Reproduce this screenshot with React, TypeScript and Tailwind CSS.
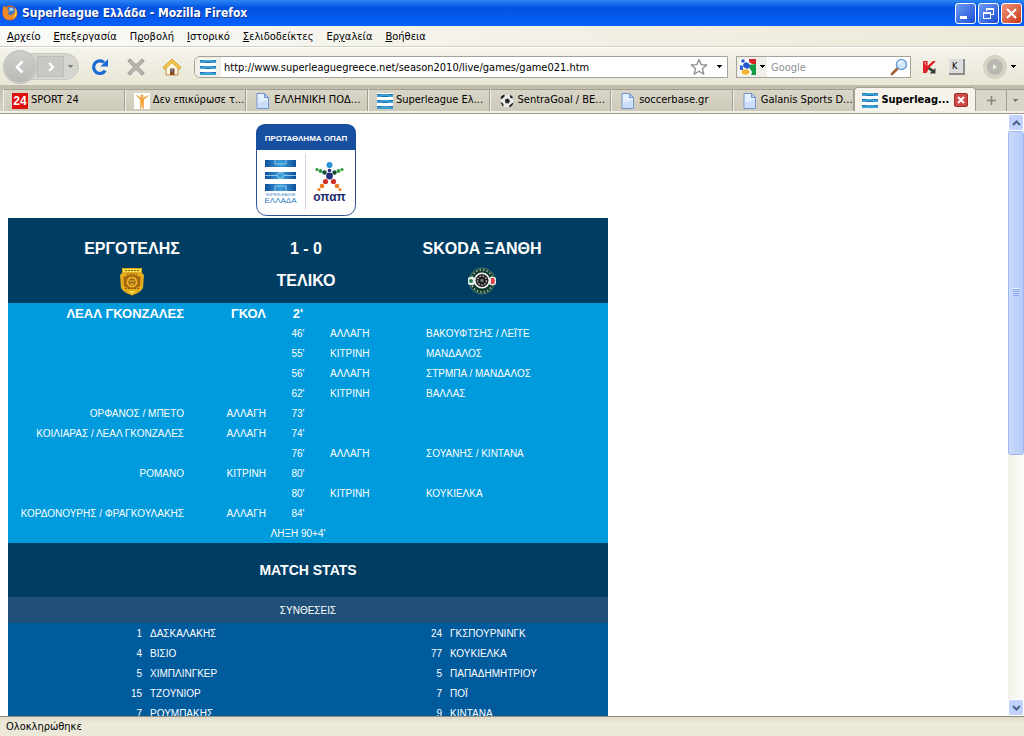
import React from 'react';

type Side = 'home' | 'away';

interface MatchEvent {
  side: Side;
  minute: string;
  action: string;
  player: string;
  goal?: boolean;
}

const menuItems = [
  { before: '', key: 'Α', after: 'ρχείο' },
  { before: '', key: 'Ε', after: 'πεξεργασία' },
  { before: 'Π', key: 'ρ', after: 'οβολή' },
  { before: '', key: 'Ι', after: 'στορικό' },
  { before: '', key: 'Σ', after: 'ελιδοδείκτες' },
  { before: 'Ερ', key: 'γ', after: 'αλεία' },
  { before: '', key: 'Β', after: 'οήθεια' },
];

const events: MatchEvent[] = [
  { side: 'home', minute: "2'", action: 'ΓΚΟΛ', player: 'ΛΕΑΛ ΓΚΟΝΖΑΛΕΣ', goal: true },
  { side: 'away', minute: "46'", action: 'ΑΛΛΑΓΗ', player: 'ΒΑΚΟΥΦΤΣΗΣ / ΛΕΪΤΕ' },
  { side: 'away', minute: "55'", action: 'ΚΙΤΡΙΝΗ', player: 'ΜΑΝΔΑΛΟΣ' },
  { side: 'away', minute: "56'", action: 'ΑΛΛΑΓΗ', player: 'ΣΤΡΜΠΑ / ΜΑΝΔΑΛΟΣ' },
  { side: 'away', minute: "62'", action: 'ΚΙΤΡΙΝΗ', player: 'ΒΑΛΛΑΣ' },
  { side: 'home', minute: "73'", action: 'ΑΛΛΑΓΗ', player: 'ΟΡΦΑΝΟΣ / ΜΠΕΤΟ' },
  { side: 'home', minute: "74'", action: 'ΑΛΛΑΓΗ', player: 'ΚΟΙΛΙΑΡΑΣ / ΛΕΑΛ ΓΚΟΝΖΑΛΕΣ' },
  { side: 'away', minute: "76'", action: 'ΑΛΛΑΓΗ', player: 'ΣΟΥΑΝΗΣ / ΚΙΝΤΑΝΑ' },
  { side: 'home', minute: "80'", action: 'ΚΙΤΡΙΝΗ', player: 'ΡΟΜΑΝΟ' },
  { side: 'away', minute: "80'", action: 'ΚΙΤΡΙΝΗ', player: 'ΚΟΥΚΙΕΛΚΑ' },
  { side: 'home', minute: "84'", action: 'ΑΛΛΑΓΗ', player: 'ΚΟΡΔΟΝΟΥΡΗΣ / ΦΡΑΓΚΟΥΛΑΚΗΣ' },
];

const lineups = [
  ['1', 'ΔΑΣΚΑΛΑΚΗΣ', '24', 'ΓΚΣΠΟΥΡΝΙΝΓΚ'],
  ['4', 'ΒΙΣΙΟ', '77', 'ΚΟΥΚΙΕΛΚΑ'],
  ['5', 'ΧΙΜΠΛΙΝΓΚΕΡ', '5', 'ΠΑΠΑΔΗΜΗΤΡΙΟΥ'],
  ['15', 'ΤΖΟΥΝΙΟΡ', '7', 'ΠΟΪ'],
  ['7', 'ΡΟΥΜΠΑΚΗΣ', '9', 'ΚΙΝΤΑΝΑ'],
];

/* ---------- Icons ---------- */

const FirefoxIcon = () => (
  <svg viewBox="0 0 16 16" className="size-4 shrink-0">
    <circle cx="8" cy="8" r="7.5" fill="#d9601a" />
    <circle cx="8.8" cy="6.8" r="5" fill="#3a78c8" />
    <path d="M8 2.5c2 0 3.500 1 4 2.500l-2 1-3-.5z" fill="#a8d4f4" />
    <path d="M.8 4c0-1.500.6-2.700 1.200-3.500.3 1 .8 1.600 1.500 2 1.500-.4 2.500.3 3 1-1 .3-1.500 1-1.200 1.700l2.200.8c0 1-1 1.200-1.700 1.800.2 2 2.200 2.800 4 2 1.700-.7 3.200-2 3-5 1.500 2.500 1.200 6-1 8.200-3 2.800-8 2.400-10-1C.6 10 .5 7 .8 4z" fill="#f08a24" />
    <path d="M13 3c2 2 2.600 5.500.8 8.200-1 1.600-2.600 2.600-4 3 2.500-2 4.300-5.500 3.200-11.200z" fill="#fbd045" />
  </svg>
);

const SuperleagueIcon = () => (
  <svg viewBox="0 0 16 16" className="size-4 shrink-0" shapeRendering="crispEdges">
    <rect width="16" height="16" fill="#fff" />
    <rect y="1" width="16" height="3" fill="#3d9fd3" />
    <rect y="7" width="16" height="3" fill="#3d9fd3" />
    <rect y="13" width="16" height="3" fill="#3d9fd3" />
    <path d="M0 1h4v1H0zM12 1h4v1h-4zM5 3h6v1H5zM0 7h4v1H0zM12 7h4v1h-4zM5 9h6v1H5zM0 13h4v1H0zM12 13h4v1h-4z" fill="#1f6fae" />
  </svg>
);

const DocumentIcon = () => (
  <svg viewBox="0 0 16 16" className="size-4 shrink-0">
    <path d="M2 .5h7.500l4 4v11H2z" fill="#e4effd" stroke="#6f93cc" />
    <path d="M9.500.5v4h4z" fill="#b9d1f3" stroke="#6f93cc" />
    <path d="M3 10l9.500-3v8H3z" fill="#c9dcf8" />
  </svg>
);

const Sport24Icon = () => (
  <svg viewBox="0 0 16 16" className="size-4 shrink-0">
    <rect width="16" height="16" fill="#e01010" />
    <text x="8" y="12" textAnchor="middle" fontSize="12" fontWeight="700" fill="#fff" fontFamily="Liberation Sans, sans-serif">24</text>
  </svg>
);

const AthleteIcon = () => (
  <svg viewBox="0 0 16 16" className="size-4 shrink-0">
    <rect width="16" height="16" fill="#fff" />
    <circle cx="8" cy="2.800" r="1.400" fill="#f0a23c" />
    <path d="M2 1.500l4 2.800h4l4.500-2.300-.3 1.200-4 3-.5 3.800.3 5.500H8.600L8 11l-.8 5H6L6.300 10 6 6.500 2.500 3z" fill="#f0a23c" />
  </svg>
);

const BallIcon = () => (
  <svg viewBox="0 0 16 16" className="size-4 shrink-0">
    <circle cx="8" cy="8" r="7" fill="#e9e9e9" stroke="#b5b5b5" strokeWidth=".6" />
    <path d="M6 6.500l3-1 2 2.200-1.400 2.800-3.200-.6zM2 3.500L5 1.500l1 1.500-2.500 2.600L1.600 6zM11 1.800l2.700 2-.2 2-2.500-1.300zM1.500 9.500l2 .3 1.300 2.500-.8 1.300zM12 11l2.400-1.500-.8 2.500-2.800 2.500-.8-1.500z" fill="#222" />
  </svg>
);

const ReloadIcon = () => (
  <svg viewBox="0 0 18 18" className="size-[18px]">
    <path d="M14.200 12.600A6.300 6.300 0 1 1 13 4.400" fill="none" stroke="#1c6ad4" strokeWidth="3.200" />
    <path d="M17 1v7.500H9.500z" fill="#1c6ad4" />
  </svg>
);

const StopIcon = () => (
  <svg viewBox="0 0 18 18" className="size-[18px]">
    <path d="M3 3l12 12M15 3L3 15" stroke="#a5a49f" strokeWidth="4" strokeLinecap="square" />
    <path d="M3 3l12 12M15 3L3 15" stroke="#b5b4af" strokeWidth="2.500" />
  </svg>
);

const HomeIcon = () => (
  <svg viewBox="0 0 20 18" className="h-[18px] w-5">
    <path d="M4 9l6-6 6 6v8H4z" fill="#fdf6e0" stroke="#b68b3c" />
    <path d="M10 1l9 8.500-1.800 1.700L10 4.600l-7.200 6.600L1 9.500z" fill="#f9c944" stroke="#c98a1c" strokeWidth=".8" />
    <rect x="8" y="10.500" width="4.500" height="6.500" fill="#8c4a24" />
    <rect x="8.800" y="11.300" width="2" height="2" fill="#4e90d8" />
  </svg>
);

const StarIcon = () => (
  <svg viewBox="0 0 18 18" className="size-[18px]">
    <path d="M9 1.500l2.200 5.100 5.500.4-4.200 3.600 1.300 5.600L9 13.300l-4.800 2.900 1.300-5.600L1.300 7l5.500-.4z" fill="#fff" stroke="#8b8b8b" strokeWidth="1.300" strokeLinejoin="round" />
  </svg>
);

const GoogleIcon = () => (
  <svg viewBox="0 0 16 16" className="size-4 shrink-0">
    <rect width="16" height="16" fill="#fff" />
    <path d="M9 0h7v5h-4L9 3z" fill="#d8232a" />
    <path d="M8 6l8-1v11h-5c1.500-2 1-4-1-6z" fill="#149b48" />
    <path d="M0 6l3 1v4H0z" fill="#2e62d9" />
    <circle cx="3" cy="2" r="1.800" fill="#2559cf" />
    <ellipse cx="6.500" cy="6.500" rx="3.400" ry="3" fill="#2559cf" transform="rotate(30 6.500 6.500)" />
    <ellipse cx="5.500" cy="13" rx="4" ry="2.800" fill="#f2b632" />
  </svg>
);

const MagnifierIcon = () => (
  <svg viewBox="0 0 18 18" className="size-[18px]">
    <path d="M7.500 10.500L2 16" stroke="#9c6238" strokeWidth="2.800" strokeLinecap="round" />
    <circle cx="11.500" cy="6.500" r="5" fill="#cfe8fb" stroke="#6b9fd6" strokeWidth="1.500" />
    <path d="M8.500 6a3 3 0 0 1 4-2.500" stroke="#fff" strokeWidth="1.500" fill="none" />
  </svg>
);

const KasperskyIcon = () => (
  <svg viewBox="0 0 16 16" className="size-4">
    <path d="M2 2h4.500v5L12 2h3L8.500 8.500 5.500 14H2z" fill="#e21f26" />
    <path d="M3 3h2v4z" fill="#f59a96" />
    <path d="M8.500 8l4 2.800L14.500 9v5.500H8.500l2-1.700L7 10z" fill="#3c3c3c" />
  </svg>
);

const Arrow = ({ className }: { className: string }) => (
  <svg viewBox="0 0 5 3" className={`h-[3px] w-[5px] shrink-0 ${className}`} shapeRendering="crispEdges">
    <path d="M0 0h5L2.500 3z" fill="currentColor" />
  </svg>
);

const tabs = [
  { icon: Sport24Icon, title: 'SPORT 24' },
  { icon: AthleteIcon, title: 'Δεν επικύρωσε τ...' },
  { icon: DocumentIcon, title: 'ΕΛΛΗΝΙΚΗ ΠΟΔ...' },
  { icon: SuperleagueIcon, title: 'Superleague Ελ...' },
  { icon: BallIcon, title: 'SentraGoal / ΒΕ...' },
  { icon: DocumentIcon, title: 'soccerbase.gr' },
  { icon: DocumentIcon, title: 'Galanis Sports D...' },
];

/* ---------- Browser chrome ---------- */

const TitleBar = () => (
  <header className="flex h-[26px] shrink-0 items-center gap-1 bg-linear-to-b from-[#2c86f5] via-[#0352e0] via-30% to-[#0561fb] pr-[2px] pl-[2px]">
    <FirefoxIcon />
    <h1 className="flex-1 font-['DejaVu_Sans_Condensed','Noto_Sans',sans-serif] text-[12px] font-bold text-white [text-shadow:1px_1px_0_#0a2f8f]">
      Superleague Ελλάδα - Mozilla Firefox
    </h1>
    <div className="flex gap-[2px]">
      <button aria-label="Minimize" className="size-[21px] rounded-[3px] border border-white bg-linear-to-br from-[#6f9bf5] to-[#1c4bd2]">
        <svg viewBox="0 0 19 19"><rect x="4" y="12" width="7" height="3" fill="#fff" /></svg>
      </button>
      <button aria-label="Restore" className="size-[21px] rounded-[3px] border border-white bg-linear-to-br from-[#6f9bf5] to-[#1c4bd2]">
        <svg viewBox="0 0 19 19" fill="none" stroke="#fff" shapeRendering="crispEdges">
          <path d="M7.500 7V4.500h7v6H12M7 5.500h8" />
          <path d="M4.500 8.500h7v6h-7zM4 9.500h8" />
        </svg>
      </button>
      <button aria-label="Close" className="size-[21px] rounded-[3px] border border-white bg-linear-to-br from-[#f0947a] to-[#c8330c]">
        <svg viewBox="0 0 19 19"><path d="M5 5l9 9M14 5l-9 9" stroke="#fff" strokeWidth="2.200" /></svg>
      </button>
    </div>
  </header>
);

const MenuBar = () => (
  <nav className="flex h-[21px] shrink-0 items-center gap-[13px] border-b border-[#d3d0c2] bg-linear-to-r from-[#fafaf8] to-[#ece9d8] pt-[2px] pl-[7px]">
    {menuItems.map((item) => (
      <button key={item.key} className="leading-[14px]">
        {item.before}
        <span className="underline">{item.key}</span>
        {item.after}
      </button>
    ))}
  </nav>
);

const Toolbar = () => (
  <div className="flex h-[38px] shrink-0 items-center border-t border-white bg-linear-to-b from-[#f5f4ec] to-[#e9e6d5] pr-2 pl-[3px]">
    <div className="flex h-[27px] w-[76px] shrink-0 items-center rounded-full border border-[#c9c8c2] bg-[#d6d5cf]">
      <button aria-label="Back" className="-ml-px flex size-[34px] shrink-0 items-center justify-center rounded-full border-2 border-[#c6c6c2] bg-linear-to-b from-[#cececb] to-[#b9b9b6]">
        <svg viewBox="0 0 16 16" className="size-4"><path d="M10.500 2.500L5 8l5.500 5.500" fill="none" stroke="#fff" strokeWidth="2.600" /></svg>
      </button>
      <button aria-label="Forward" className="flex h-[21px] w-[27px] items-center justify-center border border-[#bcbcb8] bg-[#c8c8c4]">
        <svg viewBox="0 0 12 12" className="size-3"><path d="M4 2l4 4-4 4" fill="none" stroke="#fff" strokeWidth="2.200" /></svg>
      </button>
      <Arrow className="ml-1 text-[#85857f]" />
    </div>
    <button aria-label="Reload" className="ml-3"><ReloadIcon /></button>
    <button aria-label="Stop" className="ml-[18px]"><StopIcon /></button>
    <button aria-label="Home" className="ml-[17px]"><HomeIcon /></button>
    <div className="ml-3 flex h-[22px] min-w-0 flex-1 items-center rounded-l-md border border-[#a5a397] bg-white pr-[5px]">
      <span className="flex h-5 w-[26px] items-center justify-center rounded-l-md bg-[#f0efe9]"><SuperleagueIcon /></span>
      <input
        aria-label="Address"
        className="h-5 min-w-0 flex-1 px-[3px] pt-[2px] outline-none"
        defaultValue="http://www.superleaguegreece.net/season2010/live/games/game021.htm"
      />
      <button aria-label="Bookmark this page"><StarIcon /></button>
      <button aria-label="History" className="ml-[9px]"><Arrow className="text-black" /></button>
    </div>
    <div className="ml-2 flex h-[22px] w-[175px] shrink-0 items-center border border-[#a5a397] bg-white pr-[2px]">
      <button aria-label="Search engine" className="flex h-5 w-[30px] items-center gap-[4px] bg-[#f0efe9] pl-[3px]">
        <GoogleIcon />
        <Arrow className="text-black" />
      </button>
      <input aria-label="Search" placeholder="Google" className="h-5 min-w-0 flex-1 px-1 pt-[2px] outline-none placeholder:text-[#8f8f8f]" />
      <button aria-label="Go"><MagnifierIcon /></button>
    </div>
    <button aria-label="Kaspersky" className="ml-[10px]"><KasperskyIcon /></button>
    <button className="ml-3 flex size-4 items-center border-r-2 border-b-2 border-[#8d8d8d] bg-[#dcdcdc] pl-[3px] text-[9px] leading-3">K</button>
    <button aria-label="Play" className="ml-[18px] flex size-6 items-center justify-center rounded-full border-4 border-[#d5d3c6] bg-[#b9b8b0]">
      <svg viewBox="0 0 8 8" className="size-2"><path d="M2 1l4 3-4 3z" fill="#eeede6" /></svg>
    </button>
    <Arrow className="ml-1 text-black" />
  </div>
);

const TabStrip = () => (
  <div className="shrink-0">
    <div className="flex h-[26px] items-end bg-linear-to-b from-[#bfbcae] to-[#d5d2c3] pl-[3px]">
      <div className="grid min-w-0 flex-1 grid-cols-8 items-end">
        {tabs.map((tab) => {
          const Icon = tab.icon;
          return (
            <button
              key={tab.title}
              className="flex h-[22px] min-w-0 items-center gap-[3px] border-t border-r border-l border-t-[#a19e90] border-r-[#a19e90] border-l-[#f2f0e6] bg-linear-to-b from-[#d9d6c8] to-[#cecab9] pl-2 whitespace-nowrap"
            >
              <Icon />
              <span>{tab.title}</span>
            </button>
          );
        })}
        <div className="flex h-6 min-w-0 items-center gap-[3px] rounded-t-sm border border-b-0 border-[#a19e90] bg-[#f5f3ea] pr-[7px] pl-[7px] font-bold whitespace-nowrap">
          <SuperleagueIcon />
          <button className="min-w-0 flex-1 pt-[2px] text-left">Superleag...</button>
          <button aria-label="Close tab" className="flex size-[14px] shrink-0 items-center justify-center rounded-[2px] border border-[#9c2f2b] bg-[#cf4a48]">
            <svg viewBox="0 0 8 8" className="size-2"><path d="M1 1l6 6M7 1L1 7" stroke="#fff" strokeWidth="2" /></svg>
          </button>
        </div>
      </div>
      <button aria-label="New tab" className="flex h-[22px] w-[31px] shrink-0 items-center justify-center border-t border-r border-[#a19e90] bg-[#d9d6c8]">
        <svg viewBox="0 0 9 9" className="size-[9px]"><path d="M4.500 0v9M0 4.500h9" stroke="#84827a" strokeWidth="1.600" /></svg>
      </button>
      <button aria-label="List all tabs" className="flex h-[22px] w-[17px] shrink-0 items-center justify-center border-t border-[#a19e90] bg-[#d9d6c8]">
        <Arrow className="text-[#777]" />
      </button>
    </div>
    <div className="h-[3px] border-b border-[#9d9a8c] bg-[#f3f1e7]" />
  </div>
);

const ScrollBar = () => (
  <div className="flex w-4 shrink-0 flex-col bg-linear-to-r from-[#f1f0e8] to-[#fdfdfa]">
    <button aria-label="Scroll up" className="flex h-[17px] items-center justify-center rounded-[3px] border border-white bg-[#c1d3fc]">
      <svg viewBox="0 0 9 6" className="h-[6px] w-[9px]"><path d="M1 5l3.500-3.500L8 5" fill="none" stroke="#4d6185" strokeWidth="2" /></svg>
    </button>
    <div className="flex-1">
      <div className="flex h-[57%] flex-col items-center justify-center gap-px rounded-[3px] border border-[#9db7ee] bg-linear-to-r from-[#cbdafd] to-[#b7cbf8]">
        <span className="h-px w-[6px] bg-[#8cadf2] shadow-[0_-1px_0_#eef4fe]" />
        <span className="h-px w-[6px] bg-[#8cadf2]" />
        <span className="h-px w-[6px] bg-[#8cadf2]" />
        <span className="h-px w-[6px] bg-[#8cadf2]" />
      </div>
    </div>
    <button aria-label="Scroll down" className="flex h-[17px] items-center justify-center rounded-[3px] border border-white bg-[#c1d3fc]">
      <svg viewBox="0 0 9 6" className="h-[6px] w-[9px]"><path d="M1 1l3.500 3.500L8 1" fill="none" stroke="#4d6185" strokeWidth="2" /></svg>
    </button>
  </div>
);

/* ---------- Match page ---------- */

const LeagueLogo = () => (
  <svg viewBox="0 0 100 92" className="h-[92px] w-[100px]" fontFamily="Liberation Sans, sans-serif" fontWeight="700">
    <rect x=".5" y=".5" width="99" height="91" rx="10" fill="#fff" stroke="#2a5290" />
    <path d="M0 26V10Q0 0 10 0h80q10 0 10 10v16z" fill="#174fa0" />
    <text x="50" y="17" textAnchor="middle" fontSize="8" fill="#fff">ΠΡΩΤΑΘΛΗΜΑ ΟΠΑΠ</text>
    <path d="M49.500 30v56" stroke="#c9d3e2" />
    <defs>
      <linearGradient id="stripe">
        <stop offset="0" stopColor="#0d4f9e" />
        <stop offset=".5" stopColor="#3aa0dc" />
        <stop offset="1" stopColor="#0d4f9e" />
      </linearGradient>
    </defs>
    <rect x="9" y="36" width="31" height="7" fill="url(#stripe)" />
    <rect x="9" y="48" width="31" height="7" fill="url(#stripe)" />
    <rect x="9" y="60" width="31" height="7" fill="url(#stripe)" />
    <g fill="none" stroke="#b5d9f0" strokeWidth=".8">
      <path d="M19 36v4h11v-4M19 67v-5h11v5" />
      <circle cx="24.500" cy="51.500" r="3" />
      <path d="M9 51.500h12M28 51.500h12" />
    </g>
    <text x="24.500" y="72" textAnchor="middle" fontSize="4" fill="#3a7fbf" fontWeight="400">SUPERLEAGUE</text>
    <text x="24.500" y="79" textAnchor="middle" fontSize="8" fill="#2b78bd" fontWeight="400">ΕΛΛΑΔΑ</text>
    <circle cx="73.500" cy="41" r="3" fill="#2a93d5" />
    <circle cx="73.500" cy="46.500" r="1.800" fill="#222f7c" />
    <circle cx="73.500" cy="52" r="3.400" fill="#222f7c" />
    <g fill="#2f9a3c">
      <circle cx="61" cy="45.500" r="1.600" />
      <circle cx="64.500" cy="47" r="1.900" />
      <circle cx="86" cy="45.500" r="1.600" />
      <circle cx="82.500" cy="47" r="1.900" />
    </g>
    <circle cx="68.500" cy="48.500" r="2.200" fill="#174f38" />
    <circle cx="78.500" cy="48.500" r="2.200" fill="#174f38" />
    <g fill="#cf2e2c">
      <circle cx="69.500" cy="57.500" r="2.600" />
      <circle cx="77.500" cy="57.500" r="2.600" />
    </g>
    <g fill="#ee7c22">
      <circle cx="66" cy="62" r="2.300" />
      <circle cx="81" cy="62" r="2.300" />
      <circle cx="63" cy="65.500" r="1.500" />
      <circle cx="84" cy="65.500" r="1.500" />
    </g>
    <text x="73.500" y="77" textAnchor="middle" fontSize="12" fill="#1c2a6b">οπαπ</text>
  </svg>
);

const HomeCrest = () => (
  <svg viewBox="0 0 24 29" className="mx-auto h-[29px] w-6">
    <path d="M2 1h20v5l2 2-1 13q-2 4-11 7.500Q3 25 1 21L0 8l2-2z" fill="#e0ac1e" />
    <path d="M3 2h18v3H3z" fill="#f8e04a" />
    <path d="M3.500 10q8.500-5 17 0l-.5 9q-8 6-16 0z" fill="#a5650f" />
    <circle cx="12" cy="15" r="5.500" fill="#e6b325" />
    <circle cx="12" cy="15" r="3.500" fill="#9a5c10" />
    <path d="M9.500 14h5M10 17h4" stroke="#f7d84a" />
    <path d="M5 3.500h14M7 7h10M5 21.500h14" stroke="#8e5a0c" strokeDasharray="2 1" />
    <path d="M8 24h8l-4 3z" fill="#f8dc3e" />
  </svg>
);

const AwayCrest = () => (
  <svg viewBox="0 0 30 28" className="mx-auto h-7 w-[30px]">
    <circle cx="15" cy="14" r="13" fill="#123c2c" stroke="#4c7c66" />
    <circle cx="15" cy="14" r="11" fill="none" stroke="#a9c4b6" strokeWidth="1.500" strokeDasharray="1.500 2" />
    <rect x="1" y="10" width="7" height="8" rx="2" fill="#e9eeea" />
    <rect x="22" y="10" width="7" height="8" rx="2" fill="#e9eeea" />
    <circle cx="4" cy="14" r="2" fill="#24804c" />
    <path d="M24 11h3l1 3-1 3h-3z" fill="#d8404a" />
    <circle cx="15" cy="13.500" r="8" fill="#f4f4f4" />
    <circle cx="15" cy="13.500" r="6.500" fill="#1b1b1b" />
    <circle cx="15" cy="13.500" r="4.500" fill="none" stroke="#989898" strokeWidth="1.500" strokeDasharray="2 1" />
    <circle cx="15" cy="13.500" r="1.800" fill="#777" />
  </svg>
);

const ScoreHeader = () => (
  <div className="bg-[#003d63] pt-[15px] pb-[6px]">
    <table className="w-full table-fixed text-center text-[16px] font-bold">
      <colgroup>
        <col className="w-[248px]" />
        <col className="w-[100px]" />
        <col className="w-[252px]" />
      </colgroup>
      <tbody>
        <tr className="h-8">
          <td>ΕΡΓΟΤΕΛΗΣ</td>
          <td>1 - 0</td>
          <td>SKODA ΞΑΝΘΗ</td>
        </tr>
        <tr className="h-8">
          <td><HomeCrest /></td>
          <td>ΤΕΛΙΚΟ</td>
          <td><AwayCrest /></td>
        </tr>
      </tbody>
    </table>
  </div>
);

const EventsTable = () => (
  <table className="w-full table-fixed bg-[#009bdd] whitespace-nowrap [&_td]:pt-[2px]">
    <colgroup>
      <col className="w-[180px]" />
      <col className="w-[82px]" />
      <col className="w-[56px]" />
      <col className="w-[96px]" />
      <col className="w-[186px]" />
    </colgroup>
    <tbody>
      {events.map((event, index) => (
        <tr key={index} className={event.goal ? 'h-5 text-[13px] font-bold' : 'h-5'}>
          <td className="pr-1 text-right">{event.side === 'home' && event.player}</td>
          <td className="pr-1 text-right">{event.side === 'home' && event.action}</td>
          <td className="text-center">{event.minute}</td>
          <td className="pl-1">{event.side === 'away' && event.action}</td>
          <td className="pl-1">{event.side === 'away' && event.player}</td>
        </tr>
      ))}
      <tr className="h-5">
        <td />
        <td />
        <td className="text-center">ΛΗΞΗ 90+4'</td>
        <td />
        <td />
      </tr>
    </tbody>
  </table>
);

const LineupsTable = () => (
  <table className="w-full table-fixed bg-[#005b9d] [&_td]:pt-[2px]">
    <colgroup>
      <col className="w-[138px]" />
      <col className="w-[162px]" />
      <col className="w-[138px]" />
      <col className="w-[162px]" />
    </colgroup>
    <tbody>
      {lineups.map(([homeNumber, homeName, awayNumber, awayName]) => (
        <tr key={homeName} className="h-5">
          <td className="pr-1 text-right">{homeNumber}</td>
          <td className="pl-1">{homeName}</td>
          <td className="pr-1 text-right">{awayNumber}</td>
          <td className="pl-1">{awayName}</td>
        </tr>
      ))}
    </tbody>
  </table>
);

const App = () => {
  return (
    <div className="flex h-screen flex-col overflow-hidden bg-[#ece9d8] font-['DejaVu_Sans_Condensed','Noto_Sans',sans-serif] text-[11px] text-black">
      <TitleBar />
      <MenuBar />
      <Toolbar />
      <TabStrip />
      <div className="flex min-h-0 flex-1 bg-white">
        <main className="min-w-0 flex-1 overflow-hidden pt-[10px] pl-2">
          <div className="w-[600px] font-['Liberation_Sans',Arial,sans-serif] text-[10px] leading-4 text-white">
            <div className="grid grid-cols-[248px_100px_252px] pb-[2px]">
              <div className="col-start-2"><LeagueLogo /></div>
            </div>
            <ScoreHeader />
            <EventsTable />
            <h2 className="flex h-[54px] items-center justify-center bg-[#003d63] text-[14px] font-bold">MATCH STATS</h2>
            <h3 className="flex h-[26px] items-center justify-center bg-[#205078] pt-[2px]">ΣΥΝΘΕΣΕΙΣ</h3>
            <LineupsTable />
          </div>
        </main>
        <ScrollBar />
      </div>
      <footer className="flex h-5 shrink-0 items-center border-t border-[#8f8d80] bg-linear-to-b from-[#dedbca] to-[#ece9d8] to-30% pt-[2px] pl-[6px]">
        Ολοκληρώθηκε
      </footer>
    </div>
  );
};

export default App;
